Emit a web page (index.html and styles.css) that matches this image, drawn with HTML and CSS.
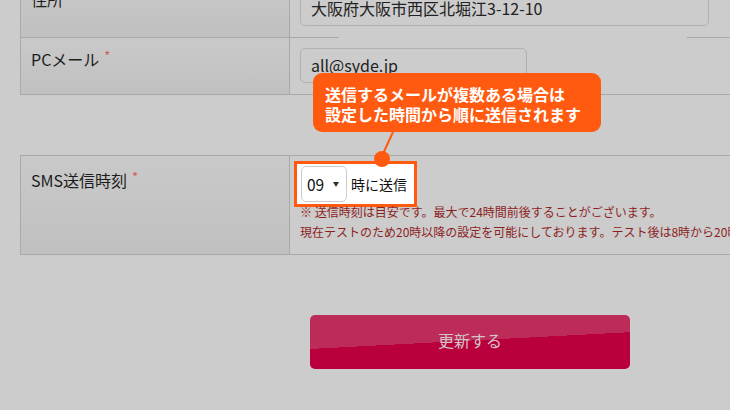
FILE: index.html
```html
<!DOCTYPE html>
<html lang="ja">
<head>
<meta charset="utf-8">
<title>SMS送信時刻</title>
<link rel="stylesheet" href="styles.css">
</head>
<body>
<div class="page">
  <div class="form-table top-table">
    <div class="row row-first">
      <div class="label">住所</div>
      <div class="value value-gap">
        <div class="input input-wide">大阪府大阪市西区北堀江3-12-10</div>
      </div>
    </div>
    <div class="row">
      <div class="label">PCメール<span class="req">*</span></div>
      <div class="value">
        <div class="input input-mail">all@syde.jp</div>
      </div>
    </div>
  </div>

  <div class="form-table sms-table">
    <div class="row row-sms">
      <div class="label label-sms">SMS送信時刻<span class="req">*</span></div>
      <div class="value value-sms">
        <div class="highlight">
          <div class="select"><span class="select-val">09</span><span class="caret"></span></div>
          <span class="suffix">時に送信</span>
        </div>
        <p class="note">※ 送信時刻は目安です。最大で24時間前後することがございます。</p>
        <p class="note note-second">現在テストのため20時以降の設定を可能にしております。テスト後は8時から20時までの設定となります。</p>
      </div>
    </div>
  </div>

  <div class="actions">
    <button class="submit" type="button">更新する</button>
  </div>
</div>

<div class="tooltip">送信するメールが複数ある場合は<br>設定した時間から順に送信されます</div>
<svg class="pointer" width="40" height="50" viewBox="0 0 40 50">
  <line x1="33" y1="2" x2="22" y2="26" stroke="#ff5a10" stroke-width="2"/>
  <circle cx="22" cy="29" r="8" fill="#ff5a10"/>
</svg>
</body>
</html>
```

FILE: styles.css
```css
* { box-sizing: border-box; }

html, body {
  margin: 0;
  padding: 0;
}

body {
  position: relative;
  width: 730px;
  height: 410px;
  overflow: hidden;
  background: #cccccc;
  font-family: "Noto Sans CJK JP", "Noto Sans", sans-serif;
  color: #1c1c1c;
}

.page {
  padding-left: 20px;
  margin-top: -19px;
  width: 800px;
}

.form-table {
  border-left: 1px solid #a9a9a9;
  width: 780px;
}

.row {
  display: grid;
  grid-template-columns: 269px 1fr;
}

.top-table .row {
  height: 57px;
  border-bottom: 1px solid #a9a9a9;
}

.top-table .row-first {
  border-bottom: none;
}

.label {
  background: linear-gradient(#c9c9c9, #c0c0c0);
  border-right: 1px solid #a9a9a9;
  padding: 6px 0 0 10px;
  font-size: 16px;
  line-height: 24px;
}

.row-first .label {
  border-bottom: 1px solid #a9a9a9;
}

.value {
  padding: 10px 0 0 10px;
}

.value-gap {
  background-image: linear-gradient(to right, #a9a9a9 49px, transparent 49px, transparent 397px, #a9a9a9 397px);
  background-size: 100% 1px;
  background-position: bottom left;
  background-repeat: no-repeat;
}

.input {
  height: 35px;
  border: 1px solid #b1b1b1;
  border-radius: 5px;
  padding: 0 10px;
  font-size: 16px;
  line-height: 32px;
  color: #222;
  white-space: nowrap;
}

.input-wide { width: 409px; }
.input-mail { width: 227px; }

.req {
  color: #d35c5c;
  font-size: 13px;
  margin-left: 5px;
  vertical-align: 5px;
}

.sms-table {
  margin-top: 60px;
  border-top: 1px solid #a9a9a9;
  border-bottom: 1px solid #a9a9a9;
}

.row-sms {
  height: 98px;
}

.label-sms {
  padding-top: 9px;
}

.value-sms {
  padding: 8px 0 0 7px;
}

.highlight {
  display: inline-flex;
  align-items: center;
  gap: 4px;
  height: 40px;
  padding: 2px 7px 2px 4px;
  background: #ffffff;
  outline: 3px solid #ff5a10;
}

.select {
  display: flex;
  align-items: center;
  width: 46px;
  height: 36px;
  border: 1px solid #cbcbcb;
  border-radius: 5px;
  background: #fff;
  padding-left: 5px;
}

.select-val {
  font-size: 15.5px;
  color: #111;
}

.caret {
  margin-left: 9px;
  width: 0;
  height: 0;
  border-left: 3.5px solid transparent;
  border-right: 3.5px solid transparent;
  border-top: 5px solid #333;
}

.suffix {
  font-size: 14px;
  color: #111;
}

.note {
  margin: -2px 0 0 3px;
  font-size: 12px;
  line-height: 20px;
  color: #8c1f1f;
  white-space: nowrap;
}

.note-second {
  margin-top: 0;
}

.actions {
  margin: 60px 0 0 290px;
}

.submit {
  display: block;
  width: 320px;
  height: 54px;
  border: none;
  border-radius: 5px;
  background: linear-gradient(177deg, #bd2b58 48%, #b9003d 48%);
  color: #d2c4c8;
  font-family: "Noto Sans CJK JP", "Noto Sans", sans-serif;
  font-size: 16px;
  padding: 0 0 4px 0;
}

.tooltip {
  position: absolute;
  left: 313px;
  top: 73px;
  width: 288px;
  height: 59px;
  padding: 11px 12px;
  border-radius: 9px;
  background: #ff5a10;
  color: #ffffff;
  font-weight: bold;
  font-size: 16px;
  line-height: 20px;
  white-space: nowrap;
}

.pointer {
  position: absolute;
  left: 360px;
  top: 130px;
}
```
